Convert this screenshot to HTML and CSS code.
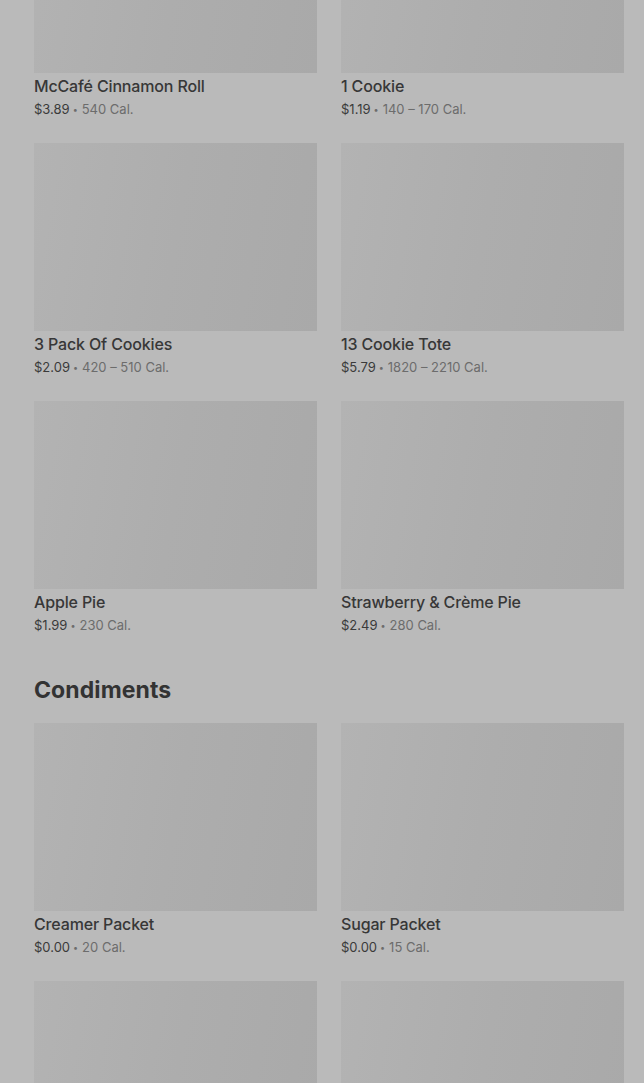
FILE: index.html
```html
<!DOCTYPE html>
<html lang="en">
<head>
    <meta charset="UTF-8">
    <meta name="viewport" content="width=device-width, initial-scale=1.0">
    <title>Menu</title>
    <link rel="stylesheet" href="styles.css">
</head>
<body>
    <div class="menu">
        <div class="grid first">
            <div class="item">
                <div class="photo"></div>
                <p class="name">McCafé Cinnamon Roll</p>
                <p class="meta"><span class="price">$3.89</span><span class="dot">•</span>540 Cal.</p>
            </div>
            <div class="item">
                <div class="photo"></div>
                <p class="name">1 Cookie</p>
                <p class="meta"><span class="price">$1.19</span><span class="dot">•</span>140 – 170 Cal.</p>
            </div>
            <div class="item">
                <div class="photo"></div>
                <p class="name">3 Pack Of Cookies</p>
                <p class="meta"><span class="price">$2.09</span><span class="dot">•</span>420 – 510 Cal.</p>
            </div>
            <div class="item">
                <div class="photo"></div>
                <p class="name">13 Cookie Tote</p>
                <p class="meta"><span class="price">$5.79</span><span class="dot">•</span>1820 – 2210 Cal.</p>
            </div>
            <div class="item">
                <div class="photo"></div>
                <p class="name">Apple Pie</p>
                <p class="meta"><span class="price">$1.99</span><span class="dot">•</span>230 Cal.</p>
            </div>
            <div class="item">
                <div class="photo"></div>
                <p class="name">Strawberry &amp; Crème Pie</p>
                <p class="meta"><span class="price">$2.49</span><span class="dot">•</span>280 Cal.</p>
            </div>
        </div>

        <h2 class="section">Condiments</h2>
        <div class="grid">
            <div class="item">
                <div class="photo"></div>
                <p class="name">Creamer Packet</p>
                <p class="meta"><span class="price">$0.00</span><span class="dot">•</span>20 Cal.</p>
            </div>
            <div class="item">
                <div class="photo"></div>
                <p class="name">Sugar Packet</p>
                <p class="meta"><span class="price">$0.00</span><span class="dot">•</span>15 Cal.</p>
            </div>
            <div class="item">
                <div class="photo"></div>
            </div>
            <div class="item">
                <div class="photo"></div>
            </div>
        </div>
    </div>
</body>
</html>
```

FILE: styles.css
```css
*{
    margin: 0;
    padding: 0;
    box-sizing: border-box;
}
html, body{
    height: 100%;
    overflow: hidden;
}
body{
    background-color: #bababa;
    font-family: "Inter", "Noto Sans", sans-serif;
    color: #363636;
}
.menu{
    padding: 0 20px 0 34px;
}
.grid{
    display: grid;
    grid-template-columns: 1fr 1fr;
    column-gap: 24px;
    row-gap: 24px;
}
.grid.first{
    margin-top: -115px;
}
.photo{
    height: 188px;
    background: linear-gradient(100deg, #b3b3b3 0%, #adadad 50%, #a9a9a9 100%);
}
.name{
    margin-top: 3px;
    font-size: 16px;
    line-height: 20px;
    font-weight: 500;
    letter-spacing: -0.15px;
    color: #373737;
}
.meta{
    margin-top: 4px;
    font-size: 13px;
    line-height: 19px;
    color: #6c6c6c;
}
.price{
    color: #3a3a3a;
}
.dot{
    font-size: 9px;
    margin: 0 4px 0 3px;
    vertical-align: 1px;
}
.section{
    margin: 39px 0 17px;
    font-size: 23px;
    line-height: 32px;
    font-weight: 700;
    color: #333333;
    letter-spacing: 0.1px;
}
```
